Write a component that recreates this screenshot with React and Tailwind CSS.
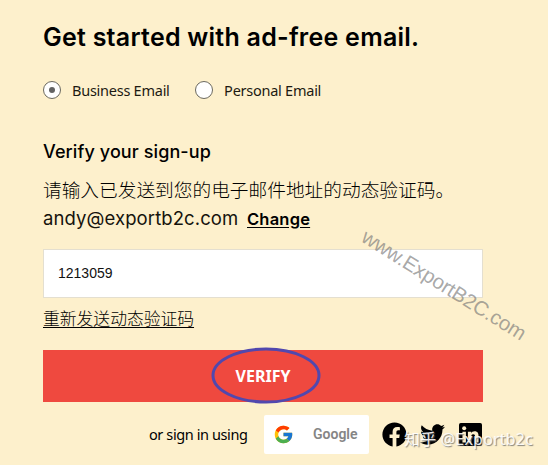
import { FaFacebook, FaTwitter } from "react-icons/fa";
import { FcGoogle } from "react-icons/fc";

function Radio({ label, checked }) {
  return (
    <label className="flex items-center">
      <span className="flex size-[18px] items-center justify-center rounded-full border border-[#6b695f] bg-white">
        {checked && <span className="size-[6.5px] rounded-full bg-[#626262]" />}
      </span>
      <span className="ml-[11px] font-['Noto_Sans',sans-serif] text-[14.5px] leading-5 tracking-[-0.25px] text-[#1c1a12]">
        {label}
      </span>
    </label>
  );
}

function LinkedIn() {
  return (
    <svg viewBox="0 0 24 24" className="mb-px ml-[14px] size-[23px] shrink-0">
      <rect width="24" height="24" rx="1.8" fill="#000" />
      <circle cx="5.4" cy="5.4" r="2.1" fill="#fdf0cc" />
      <path d="M3.6 9h3.6v11.4H3.6zM9.3 9h3.4v1.6c.6-1.1 1.8-1.9 3.5-1.9 3.5 0 4.2 2.3 4.2 5.4v6.3h-3.6v-5.6c0-1.4 0-3-1.9-3s-2.1 1.4-2.1 2.9v5.7H9.3z" fill="#fdf0cc" />
    </svg>
  );
}

export default function App() {
  return (
    <main className="relative h-[465px] w-[548px] overflow-hidden bg-[#fdf0cc] pl-[43px] text-black">
      <div className="w-[440px] whitespace-nowrap">
        <h1 className="pt-[20px] font-['Inter',sans-serif] text-[25px] font-semibold leading-[34px] tracking-[0.25px]">
          Get started with ad-free email.
        </h1>
        <div className="mt-[26px] flex h-5 items-center gap-[25.5px]">
          <Radio label="Business Email" checked />
          <Radio label="Personal Email" />
        </div>
        <h2 className="mt-[39px] font-['Inter',sans-serif] text-[18px] font-medium leading-[26px] tracking-[0.1px]">
          Verify your sign-up
        </h2>
        <p className="mt-[10px] font-['Noto_Sans_CJK_SC',sans-serif] text-[18.7px] font-light leading-7">
          请输入已发送到您的电子邮件地址的动态验证码。
        </p>
        <p className="mt-px flex items-baseline leading-7">
          <span className="w-[196px] font-['Inter',sans-serif] text-[18.5px] font-normal tracking-[0.1px] text-[#15130d]">andy@exportb2c.com</span>
          <a className="ml-[8px] font-['Inter',sans-serif] text-[16.5px] font-semibold tracking-[0.2px] underline underline-offset-2">Change</a>
        </p>
        <div className="mt-[16px] flex h-[49px] items-center border border-[#e4dfd0] bg-white pl-[14px] font-['Liberation_Sans',sans-serif] text-[14px] text-[#111]">
          1213059
        </div>
        <a className="mt-[8px] block font-['Noto_Sans_CJK_SC',sans-serif] text-[16.8px] font-light leading-6 underline underline-offset-2">
          重新发送动态验证码
        </a>
        <button className="relative mt-[20px] flex h-[52px] w-full items-center justify-center bg-[#ef493f] font-['Noto_Sans',sans-serif] text-[16px] font-bold text-white">
          VERIFY
          <svg className="absolute left-[167px] top-[-4px] h-[58px] w-[112px]" viewBox="0 0 112 58" fill="none">
            <ellipse cx="56" cy="29.5" rx="53" ry="26.5" stroke="#5148ae" strokeWidth="3" />
          </svg>
        </button>
        <div className="mt-[13px] flex h-[39px] items-center pl-[106px]">
          <span className="w-[115px] font-['Noto_Sans',sans-serif] text-[14.5px] tracking-[-0.4px]">or sign in using</span>
          <div className="flex h-[39px] w-[105px] shrink-0 items-center rounded-[2px] bg-white pl-[9px]">
            <FcGoogle className="size-[21px]" />
            <span className="ml-[19px] font-['Roboto',sans-serif] text-[14px] font-semibold text-[#858585]">Google</span>
          </div>
          <FaFacebook className="ml-[13px] size-[25px] shrink-0" />
          <FaTwitter className="ml-[13px] size-[25px] shrink-0" />
          <LinkedIn />
        </div>
      </div>
      <div className="absolute left-[344px] top-[271px] w-[200px] rotate-[32deg] text-center font-['Liberation_Sans',sans-serif] text-[20.5px] leading-7 tracking-[-0.2px] text-[#777]/65">
        www.ExportB2C.com
      </div>
      <div className="absolute left-[404px] top-[427px] whitespace-nowrap font-['Noto_Sans','Noto_Sans_CJK_SC',sans-serif] text-[16px] leading-6 tracking-[0.2px] text-white/90 [text-shadow:1px_1px_1px_#666666cc]">
        知乎 @Exportb2c
      </div>
    </main>
  );
}
